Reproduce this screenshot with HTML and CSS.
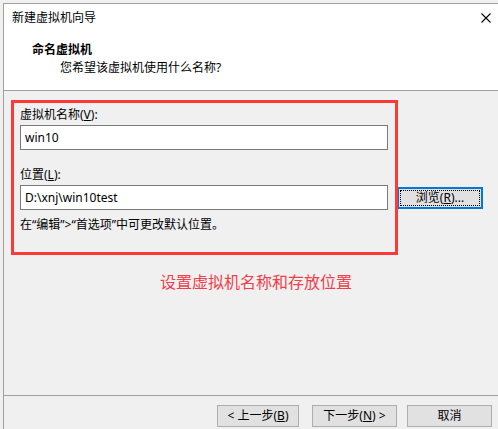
FILE: index.html
```html
<!DOCTYPE html>
<html lang="zh-CN">
<head>
<meta charset="utf-8">
<title>新建虚拟机向导</title>
<link rel="stylesheet" href="styles.css">
</head>
<body>
<div class="window">
  <header class="header">
    <div class="title-row">
      <span class="title">新建虚拟机向导</span>
      <svg class="close" width="10" height="10" viewBox="0 0 10 10" aria-hidden="true">
        <path d="M0.5 0.5 L9.5 9.5 M9.5 0.5 L0.5 9.5" stroke="#000" stroke-width="1.1" fill="none"/>
      </svg>
    </div>
    <div class="step-title">命名虚拟机</div>
    <div class="step-sub">您希望该虚拟机使用什么名称?</div>
  </header>
  <main class="panel">
    <div class="form">
      <label class="label">虚拟机名称(<u>V</u>):</label>
      <div class="input-row">
        <div class="input">win10</div>
      </div>
      <label class="label label-gap">位置(<u>L</u>):</label>
      <div class="input-row">
        <div class="input">D:\xnj\win10test</div>
        <button class="btn btn-focus"><span class="focus-ring">浏览(<u>R</u>)...</span></button>
      </div>
      <div class="hint">在“编辑”&gt;“首选项”中可更改默认位置。</div>
      <div class="caption">设置虚拟机名称和存放位置</div>
    </div>
    <div class="annotation"></div>
  </main>
  <footer class="footer">
    <button class="btn btn-back">&lt; 上一步(<u>B</u>)</button>
    <button class="btn btn-next">下一步(<u>N</u>) &gt;</button>
    <button class="btn btn-cancel">取消</button>
  </footer>
</div>
</body>
</html>
```
FILE: styles.css
```css
* { box-sizing: border-box; }
html, body {
  margin: 0;
  padding: 0;
  background: #f0f0f0;
}
body {
  font-family: "Noto Sans", "Noto Sans CJK SC", sans-serif;
  font-size: 12px;
  color: #000;
  overflow: hidden;
}
.window {
  margin: 3px 0 0 3px;
  border-left: 1px solid #a0a0a0;
  border-top: 1px solid #a0a0a0;
  height: 426px;
  background: #f0f0f0;
  display: flex;
  flex-direction: column;
}
.header {
  background: #fff;
  height: 87px;
  border-bottom: 1px solid #a0a0a0;
  padding: 6px 7px 0 8px;
}
.title-row {
  display: flex;
  justify-content: space-between;
  align-items: center;
  height: 16px;
  line-height: 16px;
}
.close { display: block; }
.step-title {
  margin-top: 16px;
  padding-left: 20px;
  font-weight: bold;
  line-height: 16px;
}
.step-sub {
  margin-top: 2px;
  padding-left: 48px;
  line-height: 16px;
}
.panel {
  position: relative;
  height: 304px;
  padding: 16px 0 0 16px;
}
.form {
  display: flex;
  flex-direction: column;
}
.label {
  line-height: 16px;
  height: 16px;
}
.label-gap { margin-top: 17px; }
.input-row {
  margin-top: 2px;
  display: flex;
  align-items: center;
  gap: 9px;
}
.input {
  width: 368px;
  height: 25px;
  border: 1px solid #7a7a7a;
  background: #fff;
  padding-left: 4px;
  line-height: 23px;
}
.btn {
  font: inherit;
  color: #000;
  background: #e1e1e1;
  border: 1px solid #adadad;
  height: 22px;
  padding: 0;
  line-height: 20px;
  text-align: center;
  margin: 0;
}
.btn-focus {
  width: 86px;
  border: 2px solid #0078d7;
  padding: 1px;
  line-height: 16px;
}
.focus-ring {
  display: block;
  height: 16px;
  border: 1px dotted #000;
  line-height: 14px;
}
.hint {
  margin-top: 7px;
  line-height: 16px;
}
.caption {
  margin-top: 39px;
  padding-left: 140px;
  font-size: 16px;
  line-height: 20px;
  color: #f23d4a;
}
.annotation {
  position: absolute;
  left: 7px;
  top: 9px;
  width: 387px;
  height: 155px;
  border: 3px solid #ff3838;
  pointer-events: none;
}
.footer {
  border-top: 1px solid #a0a0a0;
  flex: 1;
  display: flex;
  align-items: flex-start;
  padding: 9px 0 0 213px;
}
.btn-back { width: 82px; }
.btn-next { width: 85px; margin-left: 13px; }
.btn-cancel { width: 85px; margin-left: 10px; }
```
